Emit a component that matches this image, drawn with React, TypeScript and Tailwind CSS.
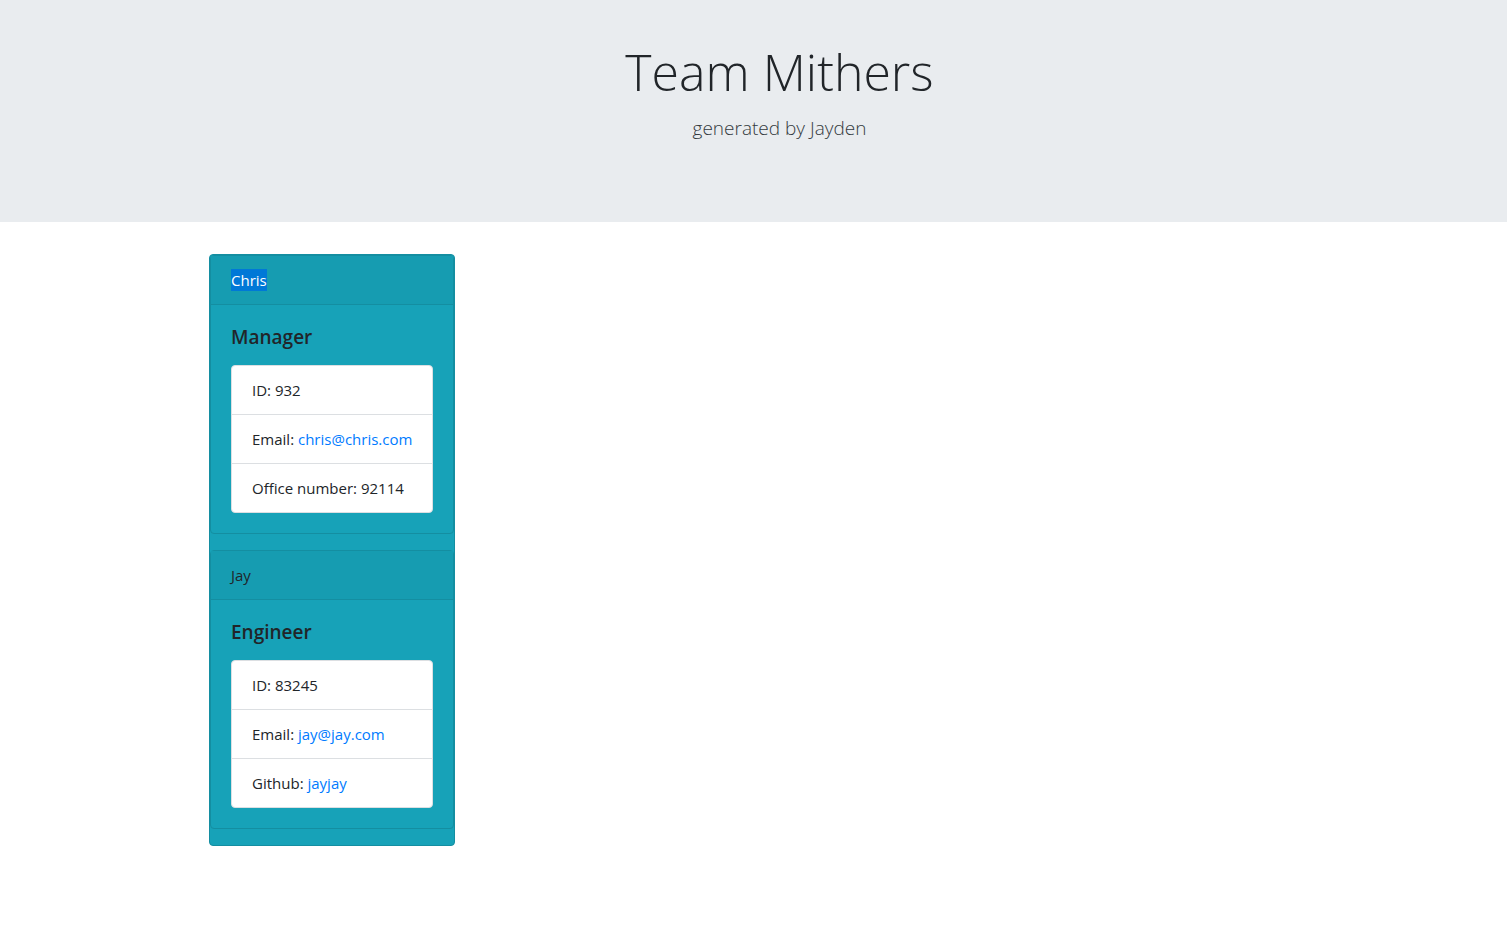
import React from "react";

const font = { fontFamily: '"Open Sans", "Noto Sans", sans-serif' };

type Row = { label: string; value: string; link?: boolean };

function EmployeeCard({ name, role, rows, selected }: { name: string; role: string; rows: Row[]; selected?: boolean }) {
  return (
    <div className="mb-4 rounded-[4px] border border-[#148ea1]">
      <div className="h-[49px] border-b border-[#148ea1] bg-[#169cb1] px-[20px] flex items-center text-[15px] text-[#212529]">
        {selected ? <span className="bg-[#0078d7] text-white">{name}</span> : <span>{name}</span>}
      </div>
      <div className="p-[20px]">
        <h5 className="text-[19px] font-semibold leading-[24px] text-[#212529] mb-[16px]">{role}</h5>
        <ul className="rounded-[4px] border border-[#dcdfe2] bg-white">
          {rows.map((r, i) => (
            <li
              key={i}
              className={`h-[48px] flex items-center px-[20px] text-[15px] text-[#212529] ${i > 0 ? "border-t border-[#dcdfe2] h-[49px]" : ""}`}
            >
              {r.label}:&nbsp;
              {r.link ? <a className="text-[#007bff]">{r.value}</a> : <span>{r.value}</span>}
            </li>
          ))}
        </ul>
      </div>
    </div>
  );
}

export default function App() {
  return (
    <div className="min-h-[935px] bg-white" style={font}>
      <div className="h-[222px] bg-[#e9ecef] flex flex-col items-center pt-[39px] pl-[52px]">
        <h1 className="text-[50px] font-light leading-[67px] text-[#212529]">Team Mithers</h1>
        <p className="mt-[7px] text-[19px] font-light leading-[30px] text-[#343a40]">generated by Jayden</p>
      </div>
      <div className="mt-[32px] ml-[209px] w-[246px] rounded-[4px] border border-[#148ea1] bg-[#17a2b8]">
        <EmployeeCard
          name="Chris"
          role="Manager"
          selected
          rows={[
            { label: "ID", value: "932" },
            { label: "Email", value: "chris@chris.com", link: true },
            { label: "Office number", value: "92114" },
          ]}
        />
        <EmployeeCard
          name="Jay"
          role="Engineer"
          rows={[
            { label: "ID", value: "83245" },
            { label: "Email", value: "jay@jay.com", link: true },
            { label: "Github", value: "jayjay", link: true },
          ]}
        />
      </div>
    </div>
  );
}
